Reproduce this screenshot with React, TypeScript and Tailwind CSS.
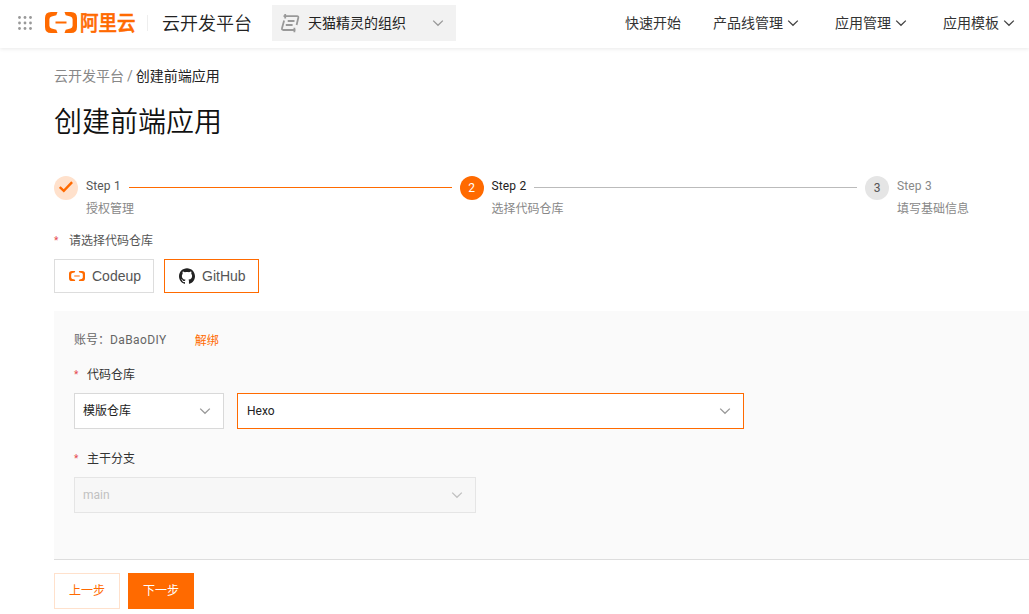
import React, { useState } from 'react';
import { SiGithub } from 'react-icons/si';

interface Step {
  title: string;
  description: string;
}

const steps: Step[] = [
  { title: 'Step 1', description: '授权管理' },
  { title: 'Step 2', description: '选择代码仓库' },
  { title: 'Step 3', description: '填写基础信息' },
];

const menus = ['产品线管理', '应用管理', '应用模板'];

const Chevron: React.FC<{ className?: string }> = ({ className }) => (
  <svg viewBox="0 0 14 14" className={`h-3.5 w-3.5 shrink-0 ${className || ''}`} fill="none" stroke="currentColor" strokeWidth="1.3">
    <path d="M2.2 4.6 7 9.3l4.8-4.7" />
  </svg>
);

// The bracket mark, used in the header and on the Codeup button
const CloudMark: React.FC<{ className?: string }> = ({ className }) => (
  <svg viewBox="0 0 32 21" preserveAspectRatio="none" className={className} fill="#ff6a00">
    <path d="M12.500 0H6Q0 0 0 6v9q0 6 6 6h6.500l-1.200-3.200-4.700-1.200Q4.400 16 4.400 13.800V7.200Q4.400 5 6.600 4.400l4.700-1.200ZM19.500 0H26q6 0 6 6v9q0 6-6 6h-6.500l1.200-3.200 4.700-1.200q2.200-.6 2.200-2.800V7.200q0-2.200-2.200-2.800l-4.700-1.200ZM10.500 9.400h11v2.200h-11Z" />
  </svg>
);

const Header: React.FC = () => (
  <header className="flex h-12 items-center bg-white pl-[18px] text-sm whitespace-nowrap text-[#333] shadow-[0_1px_4px_rgba(0,0,0,0.09)]">
    <svg viewBox="0 0 14 14" className="mb-0.5 h-3.5 w-3.5 shrink-0" fill="#999">
      {[1.5, 7, 12.5].map(y => [1.5, 7, 12.5].map(x => <circle key={`${x}-${y}`} cx={x} cy={y} r="1.4" />))}
    </svg>
    <CloudMark className="mb-[3px] ml-[13px] h-[21px] w-8 shrink-0" />
    <span className="mb-[3px] ml-[3px] w-14 shrink-0 origin-left scale-y-[1.13] text-[18.5px] leading-[22px] font-medium text-[#ff6a00] [-webkit-text-stroke:0.5px_#ff6a00]">阿里云</span>
    <span className="mb-0.5 ml-[11px] h-4 w-px shrink-0 bg-[#eee]" />
    <span className="ml-3.5 w-[90px] shrink-0 text-lg leading-6 font-[350] text-[#222]">云开发平台</span>
    <div className="mb-0.5 ml-5 flex h-9 w-[184px] shrink-0 items-center bg-[#f2f2f2] pr-[11px] pl-2">
      <svg viewBox="0 0 20 20" className="h-5 w-5" fill="none" stroke="#999" strokeWidth="1.8">
        <path d="M3.5 3.200H17q1.600 0 1.300 1.500L16.600 12M5.200 1v4.400M4.100 7.500 2 15.300q-.4 1.700 1.300 1.700h12.200M14.400 14.800v4.400M7.700 8h6.800M5.800 12h6.800" />
      </svg>
      <span className="ml-2 text-[#222]">天猫精灵的组织</span>
      <Chevron className="ml-auto text-[#999]" />
    </div>
    <nav className="mb-0.5 ml-[169px] flex shrink-0 items-center">
      <a href="#" className="mr-8">快速开始</a>
      {menus.map(menu => (
        <a key={menu} href="#" className="mr-[35px] flex items-center last:mr-0">
          {menu}
          <Chevron className="ml-[3px] text-[#444]" />
        </a>
      ))}
    </nav>
  </header>
);

const StepBar: React.FC<{ current: number }> = ({ current }) => (
  <div className="mt-[35px] flex h-[42px] w-[976px] text-xs">
    {steps.map((step, index) => {
      const done = index < current;
      const active = index === current;
      const circle = done
        ? 'bg-[#ffe1cc] text-[#ff6a00]'
        : active ? 'bg-[#ff6a00] text-white' : 'bg-[#e5e5e5] text-[#555]';
      const title = done ? 'text-[#555]' : active ? 'text-[#222]' : 'text-[#888]';

      return (
        <div key={step.title} className={index < 2 ? 'flex w-[405.5px] shrink-0' : 'flex shrink-0'}>
          <span className={`flex h-6 w-6 shrink-0 items-center justify-center rounded-full ${circle}`}>
            {done ? (
              <svg viewBox="0 0 14 12" className="mb-0.5 h-3 w-3.5" fill="none" stroke="currentColor" strokeWidth="2.4">
                <path d="m.8 6 4 3.8 8.3-8.600" />
              </svg>
            ) : index + 1}
          </span>
          <div className="ml-2 flex-1">
            <div className="flex h-5 items-center">
              <span className={`tracking-[0.15px] ${title}`}>{step.title}</span>
              {index < 2 && (
                <span className={`mt-[3px] mr-2 ml-2 h-px flex-1 ${done ? 'bg-[#ff6a00]' : 'bg-[#bbb]'}`} />
              )}
            </div>
            <p className="mt-1 leading-[18px] text-[#888]">{step.description}</p>
          </div>
        </div>
      );
    })}
  </div>
);

const RequiredLabel: React.FC<{ children: React.ReactNode; className?: string }> = ({ children, className }) => (
  <label className={`flex h-[18px] items-center text-xs ${className || ''}`}>
    <span className="w-[5px] text-[10px] text-[#e5484d]">*</span>
    {children}
  </label>
);

const App: React.FC = () => {
  const [source, setSource] = useState<string>('github');

  const sourceClass = (name: string) =>
    `flex h-[34px] items-center border bg-white pl-3.5 font-['Liberation_Sans'] text-sm text-[#555] ${
      source === name ? 'border-[#ff6a00]' : 'border-[#ddd]'
    }`;

  return (
    <div className="h-[614px] overflow-hidden bg-white font-[Roboto,'Noto_Sans_CJK_SC',sans-serif]">
      <Header />
      <main className="pl-[54px]">
        <div className="flex h-14 items-center text-sm text-[#888]">
          云开发平台<span className="mx-[3px]">/</span><span className="text-[#222]">创建前端应用</span>
        </div>
        <h1 className="mt-px h-9 text-[28px] leading-9 font-[350] text-[#111]">创建前端应用</h1>
        <StepBar current={1} />

        <RequiredLabel className="mt-3.5 gap-[10px] text-[#555]">请选择代码仓库</RequiredLabel>
        <div className="mt-[9px] flex gap-2.5">
          <button className={`w-[100px] ${sourceClass('codeup')}`} onClick={() => setSource('codeup')}>
            <CloudMark className="mr-[7px] h-2.5 w-4" />
            Codeup
          </button>
          <button className={`w-[95px] ${sourceClass('github')}`} onClick={() => setSource('github')}>
            <SiGithub className="mr-[7px] h-4 w-4 text-[#222]" />
            GitHub
          </button>
        </div>

        <section className="mt-[18px] h-[249px] border-b border-[#ddd] bg-[#fafafa] pt-5 pl-5 text-xs">
          <div className="flex h-[18px] items-center text-[#666]">
            <span>账号：<span className="tracking-[0.4px]">DaBaoDIY</span></span>
            <a href="#" className="mt-0.5 ml-7 text-[#ff6a00]">解绑</a>
          </div>
          <RequiredLabel className="mt-[17px] gap-2 text-[#333]">代码仓库</RequiredLabel>
          <div className="mt-[9px] flex gap-[13px] text-[#222]">
            <div className="flex h-9 w-[150px] items-center justify-between border border-[#d9d9d9] bg-white pr-[11px] pl-2">
              模版仓库
              <Chevron className="text-[#999]" />
            </div>
            <div className="flex h-9 w-[507px] items-center justify-between border border-[#ff6a00] bg-white pr-[11px] pl-[9px]">
              Hexo
              <Chevron className="text-[#999]" />
            </div>
          </div>
          <RequiredLabel className="mt-[21px] gap-2 text-[#333]">主干分支</RequiredLabel>
          <div className="mt-[9px] flex h-9 w-[402px] items-center justify-between border border-[#e5e5e5] bg-[#f7f7f7] pr-[11px] pl-2 text-[#c1c1c1]">
            main
            <Chevron />
          </div>
        </section>

        <footer className="mt-[13px] flex gap-2 text-xs">
          <button className="h-9 w-[66px] border border-[#ffe1cc] bg-white text-[#ff6a00]">上一步</button>
          <button className="h-9 w-[66px] bg-[#ff6a00] text-white">下一步</button>
        </footer>
      </main>
    </div>
  );
};

export default App;
